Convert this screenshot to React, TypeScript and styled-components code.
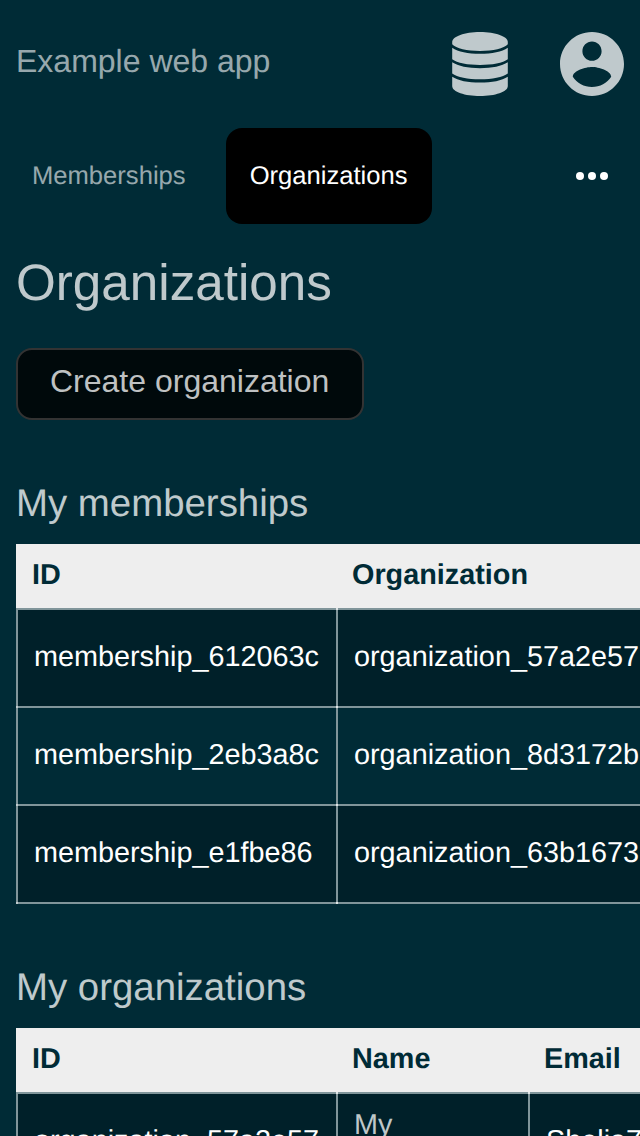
import React from 'react';
import styled, { createGlobalStyle } from 'styled-components';

const GlobalStyle = createGlobalStyle`
  * { box-sizing: border-box; }
  html, body { margin: 0; background: #002b36; }
  body {
    height: 1136px;
    overflow: hidden;
    color: #fff;
    font: 32px/1.5 'Liberation Sans', Arial, sans-serif;
    text-rendering: geometricPrecision;
  }
`;

const Page = styled.div`
  height: 1136px;
  overflow: hidden;
  padding: 0 0 0 16px;
`;

const Header = styled.header`
  display: flex;
  align-items: center;
  height: 128px;
  padding-right: 16px;
`;

const Brand = styled.a`
  flex: 1;
  color: rgba(255, 255, 255, 0.6);
  line-height: 36px;
  padding-bottom: 7px;
`;

const HeaderIcon = styled.svg<{ $width: number }>`
  display: block;
  width: ${(p) => p.$width}px;
  height: 64px;
  fill: rgba(255, 255, 255, 0.75);
  & + & { margin-left: 52px; }
`;

const Tabs = styled.nav`
  display: flex;
  align-items: center;
  gap: 16px;
  height: 96px;
  padding-right: 16px;
`;

const Tab = styled.a<{ $active?: boolean }>`
  height: 96px;
  line-height: 97px;
  font-size: 25.6px;
  padding: 0 24px 0 ${(p) => (p.$active ? 24 : 16)}px;
  border-radius: 16px;
  background: ${(p) => (p.$active ? '#000' : 'transparent')};
  color: ${(p) => (p.$active ? '#fff' : 'rgba(255, 255, 255, 0.6)')};
`;

const MoreIcon = styled.svg`
  width: 32px;
  height: 8px;
  margin: 0 16px 0 auto;
  fill: #fff;
`;

const Title = styled.h1`
  margin: 29px 0 35px;
  font-size: 51.2px;
  font-weight: 400;
  line-height: 60px;
  color: rgba(255, 255, 255, 0.75);
`;

const Button = styled.button`
  display: block;
  height: 72px;
  padding: 0 33px 6px 32px;
  border: 2px solid #333;
  border-radius: 16px;
  background: #00090b;
  color: #bfc1c2;
  font: inherit;
`;

const Section = styled.section`
  margin-top: 61px;
`;

const SectionTitle = styled.h2`
  margin: 0 0 17px;
  font-size: 38.4px;
  font-weight: 400;
  line-height: 46px;
  color: rgba(255, 255, 255, 0.75);
`;

const Table = styled.table<{ $width: number }>`
  width: ${(p) => p.$width}px;
  table-layout: fixed;
  border-collapse: separate;
  border-spacing: 0;
  font-size: 28.8px;
`;

const HeadCell = styled.th<{ $width: number }>`
  width: ${(p) => p.$width}px;
  height: 64px;
  padding: 0 16px 1px;
  line-height: 33px;
  text-align: left;
  background: #eee;
  color: #002b36;
`;

const Row = styled.tr`
  background: #002b36;
  &:nth-child(odd) { background: #002029; }
`;

const Cell = styled.td<{ $muted?: boolean }>`
  position: relative;
  height: 98px;
  padding: 0 16px 2px;
  line-height: 31px;
  border: solid #80959a;
  border-width: 2px 0 0 2px;
  color: ${(p) => (p.$muted ? 'rgba(255, 255, 255, 0.75)' : '#fff')};

  /* brighter joints where the grid lines cross */
  &::before, ${Row}:last-child &::after {
    content: '';
    position: absolute;
    left: -2px;
    width: 2px;
    height: 2px;
    background: #dfe5e6;
  }
  &::before { top: -2px; }
  ${Row}:last-child &::after { bottom: -2px; }
  ${Row} &:first-child::before, ${Row}:last-child &:first-child::after { background: #bfcacd; }
  ${Row}:first-child &:first-child::before { background: #80959a; }

  ${Row}:last-child & {
    height: 100px;
    border-bottom-width: 2px;
  }
`;

interface Column { label: string; width: number; muted?: boolean }

interface DataTableProps { columns: Column[]; rows: string[][] }

function DataTable({ columns, rows }: DataTableProps) {
  return (
    <Table $width={columns.reduce((sum, c) => sum + c.width, 0)}>
      <thead>
        <tr>{columns.map((c) => <HeadCell key={c.label} $width={c.width}>{c.label}</HeadCell>)}</tr>
      </thead>
      <tbody>
        {rows.map((row) => (
          <Row key={row[0]}>
            {row.map((value, i) => <Cell key={i} $muted={columns[i].muted}>{value}</Cell>)}
          </Row>
        ))}
      </tbody>
    </Table>
  );
}

export default function App() {
  return (
    <Page>
      <GlobalStyle />
      <Header>
        <Brand>Example web app</Brand>
        <HeaderIcon $width={56} viewBox="0 0 56 64">
          <path d="M28 0C43.500 0 55.800 4.500 55.800 10v2.300C52 16.500 41 19 28 19S4 16.500.2 12.300V10C.2 4.500 12.500 0 28 0z" />
          <path d="M.2 15.700C6 19.700 16 21.700 28 21.700s22-2 27.800-6V27.200C51 31 40 32.900 28 32.900S5 31 .2 27.200z" />
          <path d="M.2 30.300C6 34.200 16 36.200 28 36.200s22-2 27.800-5.900V41.500C51 45.300 40 47.300 28 47.300S5 45.300.2 41.500z" />
          <path d="M.2 44.700C6 48.600 16 50.600 28 50.600s22-2 27.800-5.900V54C55.800 60 43 64 28 64S.2 60 .2 54z" />
        </HeaderIcon>
        <HeaderIcon $width={64} viewBox="2 2 20 20">
          <path d="M12 2C6.480 2 2 6.480 2 12s4.480 10 10 10 10-4.480 10-10S17.520 2 12 2zm0 3c1.660 0 3 1.340 3 3s-1.340 3-3 3-3-1.340-3-3 1.340-3 3-3zm0 14.200c-2.500 0-4.710-1.280-6-3.220.030-1.990 4-3.080 6-3.080 1.990 0 5.970 1.090 6 3.080-1.290 1.940-3.500 3.220-6 3.220z" />
        </HeaderIcon>
      </Header>
      <Tabs>
        <Tab>Memberships</Tab>
        <Tab $active>Organizations</Tab>
        <MoreIcon viewBox="0 0 32 8">
          <circle cx="4" cy="4" r="4" />
          <circle cx="16" cy="4" r="4" />
          <circle cx="28" cy="4" r="4" />
        </MoreIcon>
      </Tabs>
      <Title>Organizations</Title>
      <Button>Create organization</Button>
      <Section>
        <SectionTitle>My memberships</SectionTitle>
        <DataTable
          columns={[{ label: 'ID', width: 320 }, { label: 'Organization', width: 340 }]}
          rows={[
            ['membership_612063c', 'organization_57a2e57'],
            ['membership_2eb3a8c', 'organization_8d3172b'],
            ['membership_e1fbe86', 'organization_63b1673'],
          ]}
        />
      </Section>
      <Section>
        <SectionTitle>My organizations</SectionTitle>
        <DataTable
          columns={[
            { label: 'ID', width: 320 },
            { label: 'Name', width: 192, muted: true },
            { label: 'Email', width: 320 },
          ]}
          rows={[['organization_57a2e57', 'My organization', 'Shelia7']]}
        />
      </Section>
    </Page>
  );
}
